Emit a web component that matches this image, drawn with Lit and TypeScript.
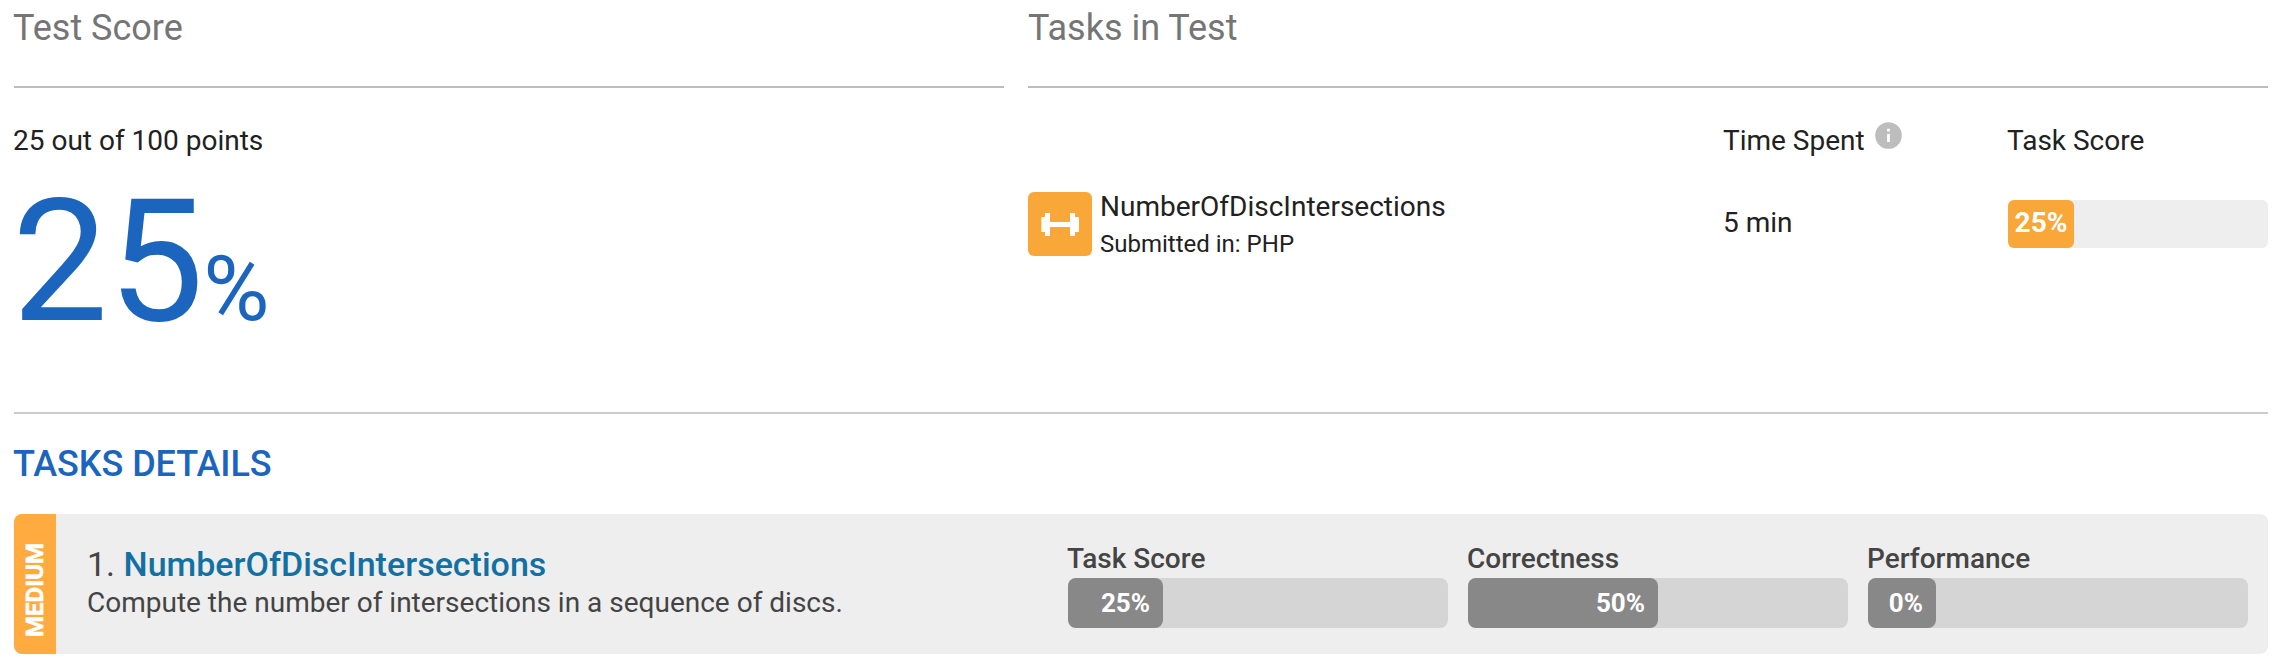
import { LitElement, html, css } from "lit";
import { customElement, property } from "lit/decorators.js";

@customElement("score-bar")
class ScoreBar extends LitElement {
  @property({ type: Number }) value = 0;
  @property() tone = "grey";

  static styles = css`
    :host { display: block; }
    .track { display: flex; height: 50px; border-radius: 8px; background: #d5d5d5; }
    .fill { box-sizing: border-box; min-width: 68px; height: 100%; border-radius: 8px; background: #888;
      color: #fff; font-weight: 700; font-size: 26px; line-height: 50px; text-align: right; padding-right: 13px; white-space: nowrap; }
    .orange { height: 48px; border-radius: 6px; background: #eee; }
    .orange .fill { min-width: 66px; border-radius: 6px; background: #f8a738; font-size: 28px; line-height: 46px; padding: 0; text-align: center; font-weight: 700; }
  `;

  render() {
    return html`<div class="track ${this.tone}"><div class="fill" style="width:${this.value}%">${this.value}%</div></div>`;
  }
}

@customElement("app-root")
class AppRoot extends LitElement {
  metrics = [
    { name: "Task Score", value: 25 },
    { name: "Correctness", value: 50 },
    { name: "Performance", value: 0 },
  ];

  static styles = css`
    :host { display: block; box-sizing: border-box; height: 662px; padding: 0 8px 0 14px; background: #fff;
      font-family: Roboto, "Liberation Sans", sans-serif; font-size: 28px; line-height: 36px; color: #212121; }
    .summary { display: grid; grid-template-columns: 990px 1240px; column-gap: 24px; height: 412px; }
    h2 { margin: 0; padding-top: 7px; height: 79px; border-bottom: 2px solid #bdbdbd; font-weight: 400; font-size: 36px; line-height: 42px; color: #757575; }
    .first { text-indent: -1px; }
    .points { margin: 35px 0 0 -1px; }
    .score { display: flex; align-items: baseline; color: #1c65be; font-size: 171px; line-height: 200px; margin: 3px 0 0 -2px; }
    .score small { font-size: 90.5px; margin-left: -1px; }
    .head, .row { display: grid; grid-template-columns: 695px 285px 260px; }
    .head { margin-top: 35px; }
    .head .last { margin-left: -1px; }
    .spent { display: flex; }
    .info { width: 27px; height: 27px; margin: -1px 0 0 10px; }
    .row { margin-top: 33px; height: 64px; align-items: center; }
    .task { display: flex; gap: 8px; height: 64px; }
    .icon { width: 64px; height: 64px; }
    .name { margin-top: -3px; }
    .lang { font-size: 24px; line-height: 36px; margin-top: 1px; }
    .min { line-height: 62px; height: 64px; }
    .details { border-top: 2px solid #ccc; padding-top: 29px; }
    h3 { margin: 0 0 29px -1px; font-weight: 500; font-size: 36px; line-height: 42px; letter-spacing: -0.05px; color: #1c65be; }
    .card { display: flex; height: 140px; border-radius: 8px; overflow: hidden; background: #eee; color: #444; }
    .level { box-sizing: border-box; width: 42px; flex: none; display: flex; align-items: center; justify-content: center; padding-top: 11px; background: #ffab40; }
    .level span { writing-mode: vertical-rl; transform: rotate(180deg); color: #fff; font-weight: 700; font-size: 24px; line-height: 42px; -webkit-text-stroke: 0.6px #fff; }
    .desc { flex: none; width: 981px; box-sizing: border-box; padding: 30px 0 0 31px; }
    .title { font-size: 34px; line-height: 40px; margin-bottom: 1px; }
    .title b { font-weight: 500; color: #1370a2; }
    .metrics { display: grid; grid-template-columns: repeat(3, 380px); gap: 20px; padding: 27px 0 0 31px; }
    .label { font-weight: 500; line-height: 36px; height: 37px; text-indent: -1px; }
  `;

  render() {
    return html`
      <section class="summary">
        <div>
          <h2 class="first">Test Score</h2>
          <div class="points">25 out of 100 points</div>
          <div class="score"><span>25</span><small>%</small></div>
        </div>
        <div>
          <h2>Tasks in Test</h2>
          <div class="head">
            <span></span>
            <span class="spent">Time Spent
              <svg class="info" viewBox="0 0 27 27"><circle cx="13.5" cy="13.5" r="13.3" fill="#bdbdbd"/><path d="M12.1 6.7h2.8v2.8h-2.8zM12.1 12h2.8v8h-2.8z" fill="#fff"/></svg>
            </span>
            <span class="last">Task Score</span>
          </div>
          <div class="row">
            <div class="task">
              <svg class="icon" viewBox="0 0 64 64"><rect width="64" height="64" rx="6" fill="#f8a738"/>
                <path fill="#fff" d="M13.3 25H17V21h5v9h20v-9h5v4h4v15h-4v4h-5v-9H22v9h-5v-4h-3.7z"/></svg>
              <div>
                <div class="name">NumberOfDiscIntersections</div>
                <div class="lang">Submitted in: PHP</div>
              </div>
            </div>
            <div class="min">5 min</div>
            <score-bar tone="orange" .value=${25}></score-bar>
          </div>
        </div>
      </section>
      <section class="details">
        <h3>TASKS DETAILS</h3>
        <div class="card">
          <div class="level"><span>MEDIUM</span></div>
          <div class="desc">
            <div class="title">1. <b>NumberOfDiscIntersections</b></div>
            <div>Compute the number of intersections in a sequence of discs.</div>
          </div>
          <div class="metrics">
            ${this.metrics.map((m) => html`<div><div class="label">${m.name}</div><score-bar .value=${m.value}></score-bar></div>`)}
          </div>
        </div>
      </section>
    `;
  }
}
